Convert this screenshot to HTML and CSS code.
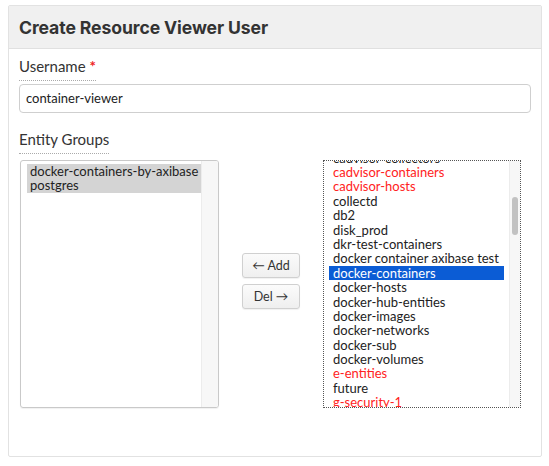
FILE: index.html
```html
<!DOCTYPE html>
<html>
<head>
<meta charset="utf-8">
<link rel="stylesheet" href="styles.css">
</head>
<body>
<div class="panel">
  <div class="panel-header"><h1 class="title">Create Resource Viewer User</h1></div>
  <div class="panel-body">
    <div class="field">
      <label class="lbl">Username <span class="req">*</span></label>
      <div class="input">container-viewer</div>
    </div>
    <div class="field field-groups">
      <label class="lbl">Entity Groups</label>
      <div class="picker">
        <div class="list list-left">
          <div class="items">
            <div class="opt sel-gray">docker-containers-by-axibase</div>
            <div class="opt sel-gray">postgres</div>
          </div>
          <div class="track"></div>
        </div>
        <div class="btns">
          <button class="btn">&#8592; Add</button>
          <button class="btn">Del &#8594;</button>
        </div>
        <div class="list list-right">
          <div class="items items-scrolled">
            <div class="opt">cadvisor-collectors</div>
            <div class="opt red">cadvisor-containers</div>
            <div class="opt red">cadvisor-hosts</div>
            <div class="opt">collectd</div>
            <div class="opt">db2</div>
            <div class="opt">disk_prod</div>
            <div class="opt">dkr-test-containers</div>
            <div class="opt">docker container axibase test</div>
            <div class="opt sel-blue">docker-containers</div>
            <div class="opt">docker-hosts</div>
            <div class="opt">docker-hub-entities</div>
            <div class="opt">docker-images</div>
            <div class="opt">docker-networks</div>
            <div class="opt">docker-sub</div>
            <div class="opt">docker-volumes</div>
            <div class="opt red">e-entities</div>
            <div class="opt">future</div>
            <div class="opt red">g-security-1</div>
          </div>
          <div class="track track-right"><div class="thumb"></div></div>
        </div>
      </div>
    </div>
  </div>
</div>
</body>
</html>
```
FILE: styles.css
```css
* { box-sizing: border-box; }
html, body { margin: 0; padding: 0; background: #fff; }
body {
  font-family: Lato, "Liberation Sans", sans-serif;
  color: #333;
}
.panel {
  margin: 5px 0 0 8px;
  width: 534px;
  height: 452px;
  border: 1px solid #e2e2e2;
  border-radius: 2px;
  display: flex;
  flex-direction: column;
}
.panel-header {
  height: 43px;
  background: #f0f0f0;
  border-bottom: 1px solid #e0e0e0;
  display: flex;
  align-items: center;
  padding-left: 10px;
}
.title {
  margin: 0;
  font-family: Inter, "Liberation Sans", sans-serif;
  font-size: 17.6px;
  font-weight: 700;
  color: #333;
  letter-spacing: -0.1px;
}
.panel-body {
  padding: 9px 0 0 10px;
}
.field { display: flex; flex-direction: column; align-items: flex-start; }
.lbl {
  font-size: 15px;
  line-height: 17px;
  padding-bottom: 5px;
  border-bottom: 1px dotted #aaa;
  color: #333;
}
.req { color: #e22; font-weight: 700; }
.input {
  margin-top: 3px;
  width: 512px;
  height: 29px;
  border: 1px solid #cfcfcf;
  border-radius: 4px;
  font-size: 13px;
  line-height: 27px;
  padding-left: 6px;
  color: #222;
}
.field-groups { margin-top: 18px; }
.picker {
  margin-top: 6px;
  margin-left: 1px;
  display: flex;
  align-items: center;
  gap: 23px;
}
.list {
  height: 248px;
  display: flex;
  overflow: hidden;
}
.list-left {
  width: 199px;
  border: 1px solid #c9c9c9;
  border-radius: 3px;
  box-shadow: 0 1px 1px rgba(0,0,0,0.06);
}
.list-right {
  width: 198px;
  border: 1px dotted #555;
}
.items {
  flex: 1;
  font-size: 13px;
  line-height: 14.4px;
  color: #222;
  white-space: nowrap;
  overflow: hidden;
}
.list-left .items { padding: 3px 0 0 6px; }
.list-left .opt { padding-left: 3px; }
.items-scrolled { padding: 0 5px 0 5px; margin-top: -10.4px; }
.list-right .opt { padding-left: 4px; }
.opt { height: 14.4px; }
.sel-gray { background: #d4d4d4; }
.sel-blue { background: #0b5cd5; color: #fff; }
.red { color: #f22; }
.track {
  width: 17px;
  background: #f7f7f7;
  border-left: 1px solid #ececec;
}
.list-right .track-right {
  width: 11px;
  position: relative;
}
.thumb {
  position: absolute;
  left: 2px;
  top: 36px;
  width: 6px;
  height: 38px;
  border-radius: 3px;
  background: #c2c2c2;
}
.btns {
  display: flex;
  flex-direction: column;
  gap: 6px;
  margin-bottom: 6px;
}
.btn {
  width: 58px;
  height: 25px;
  font-family: Lato, "Liberation Sans", sans-serif;
  font-size: 12.5px;
  color: #333;
  background: linear-gradient(#fbfbfb, #efefef);
  border: 1px solid #d0d0d0;
  border-radius: 3px;
  box-shadow: 0 1px 1px rgba(0,0,0,0.06);
  padding: 0;
}
```
